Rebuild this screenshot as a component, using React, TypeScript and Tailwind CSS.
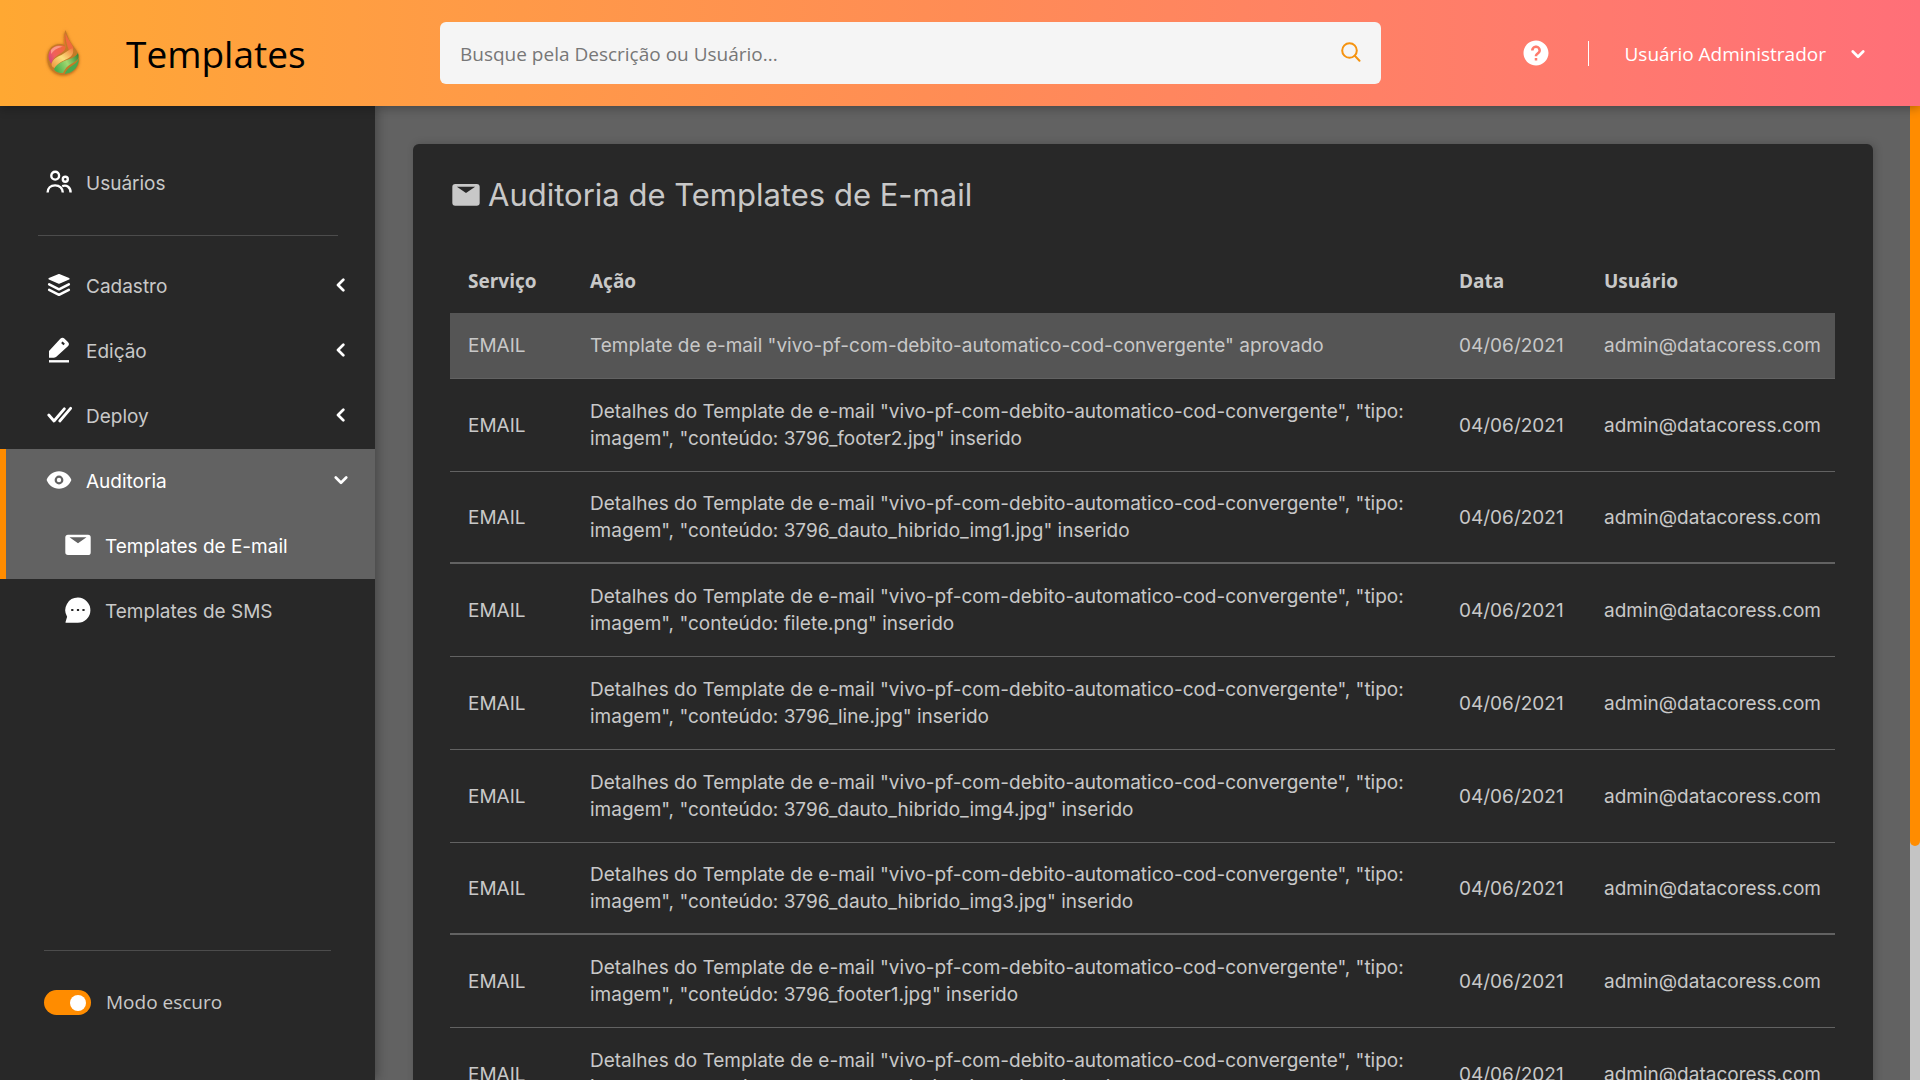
import { useState } from 'react'
import type { ReactNode } from 'react'
import { BiSolidHelpCircle } from 'react-icons/bi'

type Audit = { id: number; service: string; action: string; date: string; user: string }

const detail = (file: string) =>
  `Detalhes do Template de e-mail "vivo-pf-com-debito-automatico-cod-convergente", "tipo: imagem", "conteúdo: ${file}" inserido`

const actions = [
  'Template de e-mail "vivo-pf-com-debito-automatico-cod-convergente" aprovado',
  detail('3796_footer2.jpg'),
  detail('3796_dauto_hibrido_img1.jpg'),
  detail('filete.png'),
  detail('3796_line.jpg'),
  detail('3796_dauto_hibrido_img4.jpg'),
  detail('3796_dauto_hibrido_img3.jpg'),
  detail('3796_footer1.jpg'),
  detail('3796_dauto_hibrido_img2.jpg'),
]

const audits: Audit[] = actions.map((action, id) => ({
  id,
  service: 'EMAIL',
  action,
  date: '04/06/2021',
  user: 'admin@datacoress.com',
}))

function Logo() {
  return (
    <svg viewBox="15 5 40 54" className="h-[54px] w-10 shrink-0" aria-hidden="true">
      <defs>
        <linearGradient id="flameTop" x1="0" y1="1" x2="1" y2="0">
          <stop offset="0" stopColor="#c8388c" />
          <stop offset="0.3" stopColor="#f0605c" />
          <stop offset="0.7" stopColor="#f0683c" />
          <stop offset="1" stopColor="#e87828" />
        </linearGradient>
        <linearGradient id="flameMid" x1="0" y1="1" x2="1" y2="0">
          <stop offset="0" stopColor="#f0903c" />
          <stop offset="0.5" stopColor="#fae07c" />
          <stop offset="1" stopColor="#f07838" />
        </linearGradient>
        <linearGradient id="flameLow" x1="0" y1="0.6" x2="1" y2="0.2">
          <stop offset="0" stopColor="#4cae4c" />
          <stop offset="0.5" stopColor="#a0d870" />
          <stop offset="1" stopColor="#3c8a38" />
        </linearGradient>
        <filter id="flameGlow" x="-30%" y="-30%" width="160%" height="160%">
          <feDropShadow dx="0" dy="0.5" stdDeviation="1.4" floodColor="#9a4a08" floodOpacity="0.7" />
        </filter>
      </defs>
      <g filter="url(#flameGlow)">
        <path d="M35.5 9c-2 5-2 10-.5 15-8-3-16 1-17.500 10C16 45 23 54 33 54c9 0 17-7 16-17-.4-6-3.500-9-6.500-13C39.500 20 38 16 35.500 9z" fill="#c47a28" />
        <path d="M35.500 10c-1.500 5-1 9 0 14 .6 4-1 6-6 9-4 2.500-7 5-8 10-4-5-4-11 0-15 4-4 9-4.500 13.500-2.500C33.500 20 33.500 15 35.500 10z" fill="url(#flameTop)" />
        <path d="M35.500 12c2 6 6 10 7.500 14 1 3-1 4-3.500 5-1.500-5-4.500-11-4-19z" fill="#f06a3c" />
        <path d="M42.500 27c2 5-.5 8.500-5.500 11-5 2.300-9 4-12 9-4-1-4-4-2.500-6.500 3-5 8-5.500 12-8.500 2.500-1.800 5-3.500 8-5z" fill="url(#flameMid)" />
        <path d="M48 32c2 7-2 8-7 11-4 2-6 5-8 9-4 .5-7.500-1-9-3.500 2-5 6-6.500 10-8.500 6-2.500 11-3 14-8z" fill="url(#flameLow)" />
        <path d="M48.700 36c1 9-5 16-14 17 1.500-4 4-6 7-8 4-2.500 6.500-4.500 7-9z" fill="#48a850" />
        <path d="M21 29c3-4 8-5 12-3-4 0-8 2-12 7z" fill="#ffb0a0" opacity="0.7" />
      </g>
    </svg>
  )
}

function Icon({ children, className = 'size-[26px]' }: { children: ReactNode; className?: string }) {
  return (
    <svg
      viewBox="0 0 26 26"
      className={className}
      fill="none"
      stroke="currentColor"
      strokeWidth="2.4"
      strokeLinecap="round"
      strokeLinejoin="round"
      aria-hidden="true"
    >
      {children}
    </svg>
  )
}

const UsersIcon = () => (
  <Icon>
    <circle cx="9.200" cy="6.700" r="3.900" />
    <circle cx="19.300" cy="10.300" r="2.500" />
    <path d="M1.600 23.600c0-4.600 3-7.200 7.500-7.200s7.700 2.600 7.700 7.200M16.200 17.200c4.600-1.800 8.400 1.200 8.400 6.200" strokeLinecap="butt" />
  </Icon>
)

const LayersIcon = () => (
  <Icon>
    <path d="M13 2.800 3.200 6.800 13 11l9.800-4.200z" fill="currentColor" strokeWidth="1.600" />
    <path d="m3.200 12.300 9.800 5 9.800-5M3.200 17.800l9.800 5 9.800-5" strokeWidth="2.600" />
  </Icon>
)

const PenIcon = () => (
  <Icon>
    <path
      d="M3 20.700V14L14.300 1.800c1.300-1.400 3-1.400 4.300-.1l3.300 3.200c1.400 1.400 1.400 3 0 4.400L10.600 19.600c-.8.800-1.500 1.100-2.600 1.100zM16.600 4.400l-1.500 1.500 2.300 2.300 1.500-1.500z"
      fill="currentColor"
      fillRule="evenodd"
      stroke="none"
    />
    <path d="M3 24.300h20" strokeLinecap="butt" />
  </Icon>
)

const ChecksIcon = () => (
  <Icon>
    <path d="m2.800 13 5.200 6L18.300 6.800M13.800 19 24.600 6.300" strokeWidth="2.800" />
  </Icon>
)

const EyeIcon = () => (
  <Icon>
    <path
      d="M13 4.300C7 4.300 2.600 7.800.6 13c2 5.200 6.400 8.700 12.400 8.700s10.400-3.500 12.400-8.700C23.400 7.800 19 4.300 13 4.300zM13 8.600a4.400 4.400 0 1 1 0 8.800 4.400 4.400 0 0 1 0-8.800z"
      fill="currentColor"
      fillRule="evenodd"
      stroke="none"
    />
    <circle cx="13" cy="13" r="2.200" fill="currentColor" stroke="none" />
  </Icon>
)

const EnvelopeIcon = ({ className }: { className?: string }) => (
  <Icon className={className}>
    <path
      d="M3 2.700h20a2.700 2.700 0 0 1 2.700 2.700v15A2.700 2.700 0 0 1 23 23H3a2.700 2.700 0 0 1-2.700-2.700v-15A2.700 2.700 0 0 1 3 2.700zM4.500 5.300 13 11.200l8.500-5.900z"
      fill="currentColor"
      fillRule="evenodd"
      stroke="none"
    />
  </Icon>
)

const MessageIcon = () => (
  <Icon>
    <path
      d="M13 .6a12.600 12.600 0 1 1-.4 25.200H1.200c-.6 0-.9-.5-.6-1.100l1.500-5A12.600 12.600 0 0 1 13 .6zM6.200 12h2.200v2H6.200zM11.900 12h2.200v2h-2.200zM17.400 12h2.200v2h-2.200z"
      fill="currentColor"
      fillRule="evenodd"
      stroke="none"
    />
  </Icon>
)

function Chevron({ open }: { open: boolean }) {
  return (
    <svg
      viewBox="0 0 14 14"
      className="size-3.5"
      fill="none"
      stroke="currentColor"
      strokeWidth="2.700"
      strokeLinecap="round"
      strokeLinejoin="round"
      aria-hidden="true"
    >
      <path d={open ? 'm1.800 4.500 5.200 5.200 5.200-5.200' : 'M9.300 1.800 4 7l5.300 5.200'} />
    </svg>
  )
}

type NavItemProps = {
  icon: ReactNode
  label: string
  active?: boolean
  nested?: boolean
  expandable?: boolean
}

function NavItem({ icon, label, active, nested, expandable }: NavItemProps) {
  return (
    <li>
      <a
        href="#"
        aria-current={active && nested ? 'page' : undefined}
        className={[
          'flex h-[65px] items-center gap-3.5 border-l-6 pr-[27px] text-white',
          nested ? 'pl-[59px]' : 'pl-10',
          active ? 'border-[#ff8c00] bg-[#626262]' : 'border-transparent',
        ].join(' ')}
      >
        <span className="pb-1">{icon}</span>
        <span className={active ? 'grow text-white' : 'grow text-[#c8c8c8]'}>{label}</span>
        {expandable && (
          <span className="pb-1">
            <Chevron open={!!active} />
          </span>
        )}
      </a>
    </li>
  )
}

export default function App() {
  const [dark, setDark] = useState(true)
  const [query, setQuery] = useState('')

  return (
    <div className="flex h-screen flex-col overflow-hidden bg-[#626262] font-['Inter',sans-serif] text-[19px] leading-[27px] text-[#c8c8c8]">
      <header className="relative z-20 flex h-[106px] shrink-0 items-center bg-linear-to-r from-[#ffa832] via-[#ff8c55] to-[#ff6f78] font-['Open_Sans',sans-serif] shadow-[0_2px_10px_rgba(0,0,0,0.3)]">
        <div className="flex w-[440px] shrink-0 items-center gap-[41px] pl-[45px]">
          <Logo />
          <h1 className="pt-0.5 text-[37px] leading-[50px] text-black">Templates</h1>
        </div>
        <form className="flex h-[62px] w-[49%] items-center rounded-md bg-[#f5f5f5] pr-5 pl-5" onSubmit={(e) => e.preventDefault()}>
          <input
            type="text"
            aria-label="Busca"
            value={query}
            onChange={(e) => setQuery(e.target.value)}
            placeholder="Busque pela Descrição ou Usuário..."
            className="h-full min-w-0 grow bg-transparent pt-0.5 text-[#333] outline-none placeholder:text-[#777]"
          />
          <button type="submit" aria-label="Buscar" className="pb-0.5 text-[#f59310]">
            <svg viewBox="0 0 20 20" className="size-5" fill="none" stroke="currentColor" strokeWidth="2" strokeLinecap="round" aria-hidden="true">
              <circle cx="8.500" cy="8.500" r="7.300" />
              <path d="m13.800 13.800 4.700 4.900" />
            </svg>
          </button>
        </form>
        <div className="flex grow items-center justify-end pr-[55px] text-white">
          <button type="button" aria-label="Ajuda" className="text-[30px]">
            <BiSolidHelpCircle />
          </button>
          <span className="mr-9 ml-[37px] h-[25px] w-px bg-white" />
          <button type="button" className="flex items-center gap-[25px] pt-0.5">
            Usuário Administrador
            <Chevron open />
          </button>
        </div>
      </header>

      <div className="flex min-h-0 grow">
        <aside className="z-10 flex w-[375px] shrink-0 flex-col bg-[#282828] shadow-[2px_0_10px_rgba(0,0,0,0.3)]">
          <nav className="grow pt-[45px]">
            <ul>
              <NavItem icon={<UsersIcon />} label="Usuários" />
            </ul>
            <hr className="mt-[19px] mr-[37px] mb-[18px] ml-[38px] border-[#4c4c4c]" />
            <ul>
              <NavItem icon={<LayersIcon />} label="Cadastro" expandable />
              <NavItem icon={<PenIcon />} label="Edição" expandable />
              <NavItem icon={<ChecksIcon />} label="Deploy" expandable />
              <NavItem icon={<EyeIcon />} label="Auditoria" expandable active />
              <NavItem icon={<EnvelopeIcon />} label="Templates de E-mail" nested active />
              <NavItem icon={<MessageIcon />} label="Templates de SMS" nested />
            </ul>
          </nav>
          <div className="mx-11 mb-16 border-t border-[#4c4c4c] pt-[38px] font-['Open_Sans',sans-serif]">
            <label className="flex items-center gap-[15px]">
              <input
                type="checkbox"
                role="switch"
                checked={dark}
                onChange={(e) => setDark(e.target.checked)}
                className="flex h-[25px] w-[47px] appearance-none items-center rounded-full bg-[#999] px-[5px] before:size-4 before:rounded-full before:bg-white checked:justify-end checked:bg-[#ff8c00]"
              />
              Modo escuro
            </label>
          </div>
        </aside>

        <main className="min-w-0 grow overflow-hidden pt-[38px] pr-[37px] pl-[38px]">
          <section className="rounded-md bg-[#282828] pt-[31px] pr-[38px] pb-8 pl-[37px] shadow-[2px_0_8px_rgba(0,0,0,0.2)]">
            <h2 className="flex items-center gap-2 pl-0.5 text-[31px] leading-10">
              <EnvelopeIcon className="size-7" />
              Auditoria de Templates de E-mail
            </h2>
            <table className="mt-[34px] w-full table-fixed border-separate border-spacing-0 text-left">
              <thead className="font-['Open_Sans',sans-serif]">
                <tr className="h-16">
                  <th className="w-[122px] px-[18px] font-bold">Serviço</th>
                  <th className="px-[18px] font-bold">Ação</th>
                  <th className="w-[145px] px-[18px] font-bold">Data</th>
                  <th className="w-[249px] px-[18px] font-bold">Usuário</th>
                </tr>
              </thead>
              <tbody className="[&_td]:border-b [&_td]:border-[#626262] [&_td]:px-[18px] [&_td]:py-[19px] [&_tr:first-child]:bg-[#555] [&_tr:nth-child(4n+3)>td]:border-b-2 [&_tr:nth-child(4n+3)>td]:py-[18px]">
                {audits.map((a) => (
                  <tr key={a.id}>
                    <td>{a.service}</td>
                    <td>{a.action}</td>
                    <td>{a.date}</td>
                    <td>{a.user}</td>
                  </tr>
                ))}
              </tbody>
            </table>
          </section>
        </main>

        <div className="w-2.5 shrink-0 bg-[#c4c4c4]">
          <div className="h-[76%] rounded-b-md bg-[#ff8c00]" />
        </div>
      </div>
    </div>
  )
}
